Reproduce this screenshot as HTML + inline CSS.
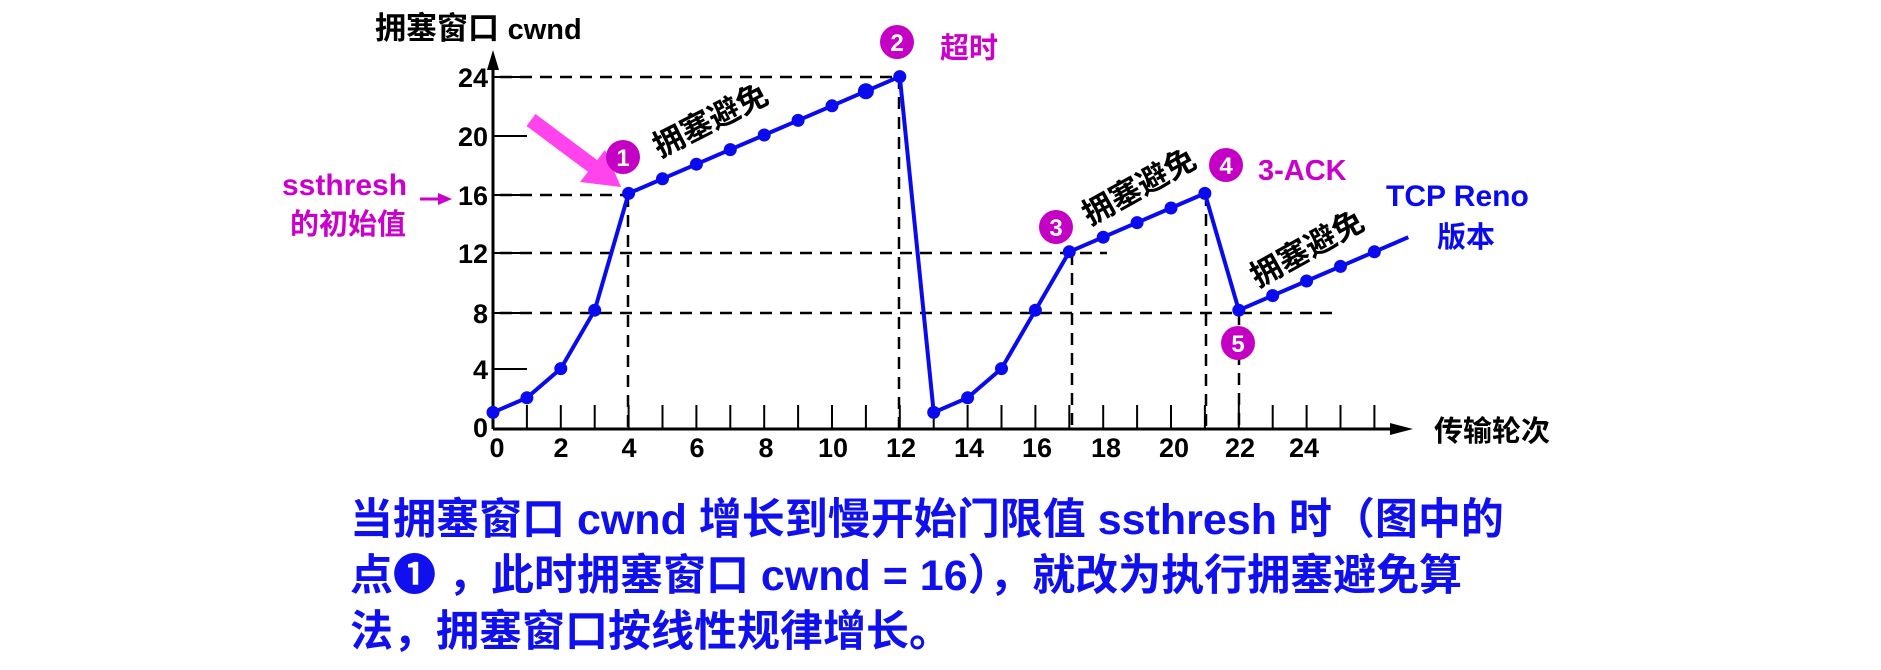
<!DOCTYPE html>
<html><head><meta charset="utf-8"><style>
html,body{margin:0;padding:0;background:#fff;width:1881px;height:670px;overflow:hidden}
svg{position:absolute;left:0;top:0}
.bt{position:absolute;left:350px;font-family:"Liberation Sans","Noto Sans CJK SC",sans-serif;font-weight:bold;font-size:43px;color:#1010ee;white-space:nowrap;line-height:56px}
</style></head><body>
<svg width="1881" height="670" viewBox="0 0 1881 670">
<g font-family="Liberation Sans, Noto Sans CJK SC, sans-serif" font-weight="bold">
<text x="375" y="39" font-size="31" fill="#000">拥塞窗口 <tspan font-size="29">cwnd</tspan></text>
<line x1="493" y1="429" x2="493" y2="62" stroke="#000" stroke-width="3"/>
<polygon points="493,50 487,70 499,70" fill="#000"/>
<line x1="493" y1="429" x2="1395" y2="429" stroke="#000" stroke-width="3"/>
<polygon points="1413,429 1390,423 1390,435" fill="#000"/>
<g stroke="#000" stroke-width="2">
<line x1="493" y1="77" x2="527" y2="77"/><line x1="493" y1="136" x2="527" y2="136"/><line x1="493" y1="195" x2="527" y2="195"/><line x1="493" y1="253" x2="527" y2="253"/><line x1="493" y1="313" x2="527" y2="313"/><line x1="493" y1="369" x2="527" y2="369"/>
</g>
<g stroke="#000" stroke-width="2" id="ticks"></g>
<g font-size="27" fill="#000" text-anchor="end">
<text x="488" y="87">24</text><text x="488" y="146">20</text><text x="488" y="205">16</text><text x="488" y="263">12</text><text x="488" y="323">8</text><text x="488" y="379">4</text><text x="488" y="437">0</text>
</g>
<g font-size="27" fill="#000" text-anchor="middle">
<text x="497" y="457">0</text><text x="561" y="457">2</text><text x="629" y="457">4</text><text x="697" y="457">6</text><text x="766" y="457">8</text><text x="833" y="457">10</text><text x="901" y="457">12</text><text x="969" y="457">14</text><text x="1037" y="457">16</text><text x="1106" y="457">18</text><text x="1174" y="457">20</text><text x="1240" y="457">22</text><text x="1304" y="457">24</text>
</g>
<text x="1434" y="441" font-size="29" fill="#000">传输轮次</text>
<g stroke="#000" stroke-width="2.5" stroke-dasharray="12,8" fill="none">
<line x1="500" y1="77" x2="899" y2="77"/>
<line x1="500" y1="195" x2="628" y2="195"/>
<line x1="500" y1="253" x2="1107" y2="253"/>
<line x1="500" y1="313" x2="1334" y2="313"/>
<line x1="628" y1="195" x2="628" y2="429"/>
<line x1="899" y1="77" x2="899" y2="429"/>
<line x1="1072" y1="253" x2="1072" y2="429"/>
<line x1="1206" y1="194" x2="1206" y2="429"/>
<line x1="1239" y1="313" x2="1239" y2="429"/>
</g>
<line x1="531" y1="120" x2="598" y2="170" stroke="#ff44ee" stroke-width="15"/>
<polygon points="621,187 580,182 605,150" fill="#ff44ee"/>
<text x="282" y="195" font-size="30" fill="#cc00cc">ssthresh</text>
<text x="290" y="234" font-size="29" fill="#cc00cc">的初始值</text>
<line x1="420" y1="199" x2="440" y2="199" stroke="#cc00cc" stroke-width="3"/>
<polygon points="452,199 438,193 438,205" fill="#cc00cc"/>
<polyline id="pl" fill="none" stroke="#0a0aee" stroke-width="4" points=""/>
<g id="dots" fill="#0a0aee"></g>
<g font-size="24" fill="#fff" text-anchor="middle">
<circle cx="623" cy="157" r="17" fill="#c400c4"/><text x="623" y="166">1</text>
<circle cx="897" cy="42" r="17" fill="#c400c4"/><text x="897" y="51">2</text>
<circle cx="1056" cy="227" r="17" fill="#c400c4"/><text x="1056" y="236">3</text>
<circle cx="1226" cy="165" r="17" fill="#c400c4"/><text x="1226" y="174">4</text>
<circle cx="1238" cy="343" r="17" fill="#c400c4"/><text x="1238" y="352">5</text>
</g>
<text x="940" y="58" font-size="29" fill="#cc00cc">超时</text>
<text x="1258" y="180" font-size="29" fill="#cc00cc">3-ACK</text>
<text x="1386" y="206" font-size="30" fill="#0a0aee">TCP Reno</text>
<text x="1437" y="247" font-size="29" fill="#0a0aee">版本</text>
<g font-size="31" fill="#000">
<text transform="translate(660,158) rotate(-27)">拥塞避免</text>
<text transform="translate(1090,226) rotate(-29)">拥塞避免</text>
<text transform="translate(1258,288) rotate(-29)">拥塞避免</text>
</g>
</g>
</svg>
<div class="bt" style="top:492px">当拥塞窗口 cwnd 增长到慢开始门限值 ssthresh 时（图中的</div>
<div class="bt" style="top:548px">点❶ ，此时拥塞窗口 cwnd = 16），就改为执行拥塞避免算</div>
<div class="bt" style="top:604px">法，拥塞窗口按线性规律增长。</div>
<script>
var d=[[0,1],[1,2],[2,4],[3,8],[4,16],[5,17],[6,18],[7,19],[8,20],[9,21],[10,22],[11,23],[12,24],[13,1],[14,2],[15,4],[16,8],[17,12],[18,13],[19,14],[20,15],[21,16],[22,8],[23,9],[24,10],[25,11],[26,12]];
function X(r){return 493+33.9*r}function Y(v){return 427-14.6*v}
var p=d.map(function(a){return X(a[0])+","+Y(a[1])}).join(" ")+" "+X(27)+","+Y(13);
document.getElementById("pl").setAttribute("points",p);
var s="";
d.forEach(function(a){s+='<circle cx="'+X(a[0])+'" cy="'+Y(a[1])+'" r="'+(a[0]==11?8:6.5)+'"/>';});
document.getElementById("dots").innerHTML=s;
var t="";for(var r=1;r<=26;r++){t+='<line x1="'+X(r)+'" y1="405" x2="'+X(r)+'" y2="429"/>';}
document.getElementById("ticks").innerHTML=t;
</script>
</body></html>
